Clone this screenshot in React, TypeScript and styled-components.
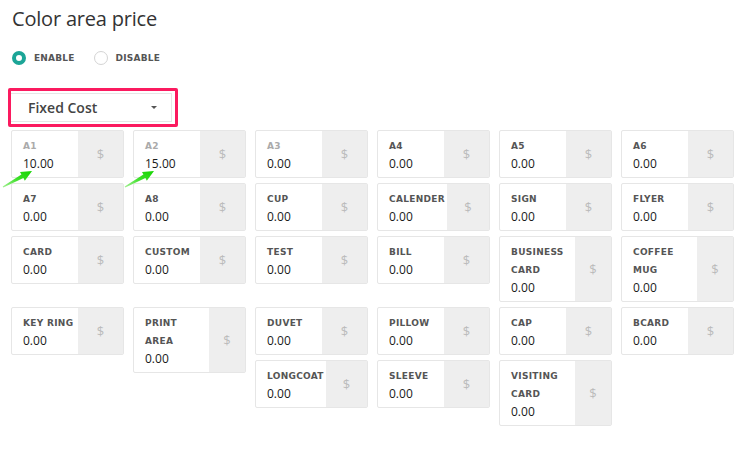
import React from 'react';
import styled, { createGlobalStyle } from 'styled-components';

interface Item {
  label: string;
  value: string;
  muted?: boolean;
}

const items: Item[] = [
  { label: 'A1', value: '10.00', muted: true },
  { label: 'A2', value: '15.00', muted: true },
  { label: 'A3', value: '0.00', muted: true },
  { label: 'A4', value: '0.00' },
  { label: 'A5', value: '0.00' },
  { label: 'A6', value: '0.00' },
  { label: 'A7', value: '0.00' },
  { label: 'A8', value: '0.00' },
  { label: 'CUP', value: '0.00' },
  { label: 'CALENDER', value: '0.00' },
  { label: 'SIGN', value: '0.00' },
  { label: 'FLYER', value: '0.00' },
  { label: 'CARD', value: '0.00' },
  { label: 'CUSTOM', value: '0.00' },
  { label: 'TEST', value: '0.00' },
  { label: 'BILL', value: '0.00' },
  { label: 'BUSINESS CARD', value: '0.00' },
  { label: 'COFFEE MUG', value: '0.00' },
  { label: 'KEY RING', value: '0.00' },
  { label: 'PRINT AREA', value: '0.00' },
  { label: 'DUVET', value: '0.00' },
  { label: 'PILLOW', value: '0.00' },
  { label: 'CAP', value: '0.00' },
  { label: 'BCARD', value: '0.00' },
  { label: 'LONGCOAT', value: '0.00' },
  { label: 'SLEEVE', value: '0.00' },
  { label: 'VISITING CARD', value: '0.00' },
];

const GlobalStyle = createGlobalStyle`
  html, body {
    margin: 0;
    padding: 0;
    background: #fff;
    font-family: 'Open Sans', sans-serif;
  }
`;

const Page = styled.div`
  position: relative;
  width: 747px;
  height: 449px;
  padding: 6px 0 0 11px;
  box-sizing: border-box;
  overflow: hidden;
`;

const Title = styled.h2`
  margin: 0 0 0 1px;
  font-family: 'Open Sans', sans-serif;
  font-weight: 400;
  font-size: 20px;
  line-height: 26px;
  color: #333;
  letter-spacing: -0.2px;
`;

const RadioRow = styled.div`
  display: flex;
  align-items: center;
  gap: 9px;
  margin: 18px 0 0 1px;
  height: 16px;
`;

const RadioOption = styled.label`
  display: flex;
  align-items: center;
  gap: 8px;
  margin-right: 10px;
`;

const RadioDot = styled.span<{ $checked?: boolean }>`
  width: 14px;
  height: 14px;
  border-radius: 50%;
  box-sizing: border-box;
  border: ${(p) => (p.$checked ? '4px solid #1ca597' : '1px solid #d4d4d4')};
  background: #fff;
`;

const RadioText = styled.span`
  font-family: 'DejaVu Sans', sans-serif;
  font-weight: 700;
  font-size: 9px;
  color: #555;
  letter-spacing: 0.2px;
`;

const Highlight = styled.div`
  width: 170px;
  height: 39px;
  margin: 22px 0 0 -3px;
  border: 3px solid #fb1a5f;
  border-radius: 2px;
  box-sizing: border-box;
  padding: 2px 3px 2px 0;
`;

const Select = styled.div`
  display: flex;
  align-items: center;
  justify-content: space-between;
  height: 100%;
  border: 1px solid #e6e6e6;
  border-left: none;
  box-sizing: border-box;
  padding: 0 14px 0 17px;
  font-family: 'Open Sans', sans-serif;
  font-weight: 600;
  font-size: 14px;
  color: #444;
`;

const Caret = styled.span`
  width: 0;
  height: 0;
  border-left: 3px solid transparent;
  border-right: 3px solid transparent;
  border-top: 3px solid #555;
`;

const Cards = styled.div`
  margin-top: 3px;
  &::after {
    content: '';
    display: block;
    clear: both;
  }
`;

const Card = styled.div`
  float: left;
  display: flex;
  width: 113px;
  margin: 0 9px 5px 0;
  border: 1px solid #e6e6e6;
  border-radius: 2px;
  box-sizing: border-box;
  background: #fff;
`;

const Body = styled.div`
  flex: 0 0 auto;
  min-width: 66px;
  box-sizing: border-box;
  padding: 6px 2px 4px 11px;
`;

const Label = styled.div<{ $muted?: boolean }>`
  max-width: 62px;
  font-family: 'DejaVu Sans', sans-serif;
  font-weight: 700;
  font-size: 9px;
  line-height: 18px;
  letter-spacing: 0.3px;
  color: ${(p) => (p.$muted ? '#aaa' : '#555')};
`;

const Value = styled.div`
  font-family: 'Open Sans', sans-serif;
  font-size: 12px;
  line-height: 18px;
  color: #1a1a1a;
`;

const Addon = styled.div`
  flex: 1;
  display: flex;
  align-items: center;
  justify-content: center;
  background: #eeeeee;
  color: #bbb;
  font-family: 'Open Sans', sans-serif;
  font-size: 13px;
`;

const Arrow = styled.svg<{ $left: number }>`
  position: absolute;
  left: ${(p) => p.$left}px;
  top: 168px;
  width: 34px;
  height: 22px;
`;

const GreenArrow = ({ left }: { left: number }) => (
  <Arrow $left={left} viewBox="0 0 34 22">
    <defs>
      <linearGradient id={`g${left}`} x1="0" y1="1" x2="1" y2="0">
        <stop offset="0" stopColor="#a8f098" />
        <stop offset="0.5" stopColor="#3ee02a" />
        <stop offset="1" stopColor="#14d400" />
      </linearGradient>
    </defs>
    <path
      d="M1.7 18.4 L20.4 6.5 L19 3.9 L31 3 L23.8 12.7 L22.4 10.1 L2.3 19.6 Z"
      fill={`url(#g${left})`}
    />
  </Arrow>
);

export default function App() {
  return (
    <Page>
      <GlobalStyle />
      <Title>Color area price</Title>
      <RadioRow>
        <RadioOption>
          <RadioDot $checked />
          <RadioText>ENABLE</RadioText>
        </RadioOption>
        <RadioOption>
          <RadioDot />
          <RadioText>DISABLE</RadioText>
        </RadioOption>
      </RadioRow>
      <Highlight>
        <Select>
          Fixed Cost
          <Caret />
        </Select>
      </Highlight>
      <Cards>
        {items.map((it) => (
          <Card key={it.label}>
            <Body>
              <Label $muted={it.muted}>{it.label}</Label>
              <Value>{it.value}</Value>
            </Body>
            <Addon>$</Addon>
          </Card>
        ))}
      </Cards>
      <GreenArrow left={1} />
      <GreenArrow left={123} />
    </Page>
  );
}
